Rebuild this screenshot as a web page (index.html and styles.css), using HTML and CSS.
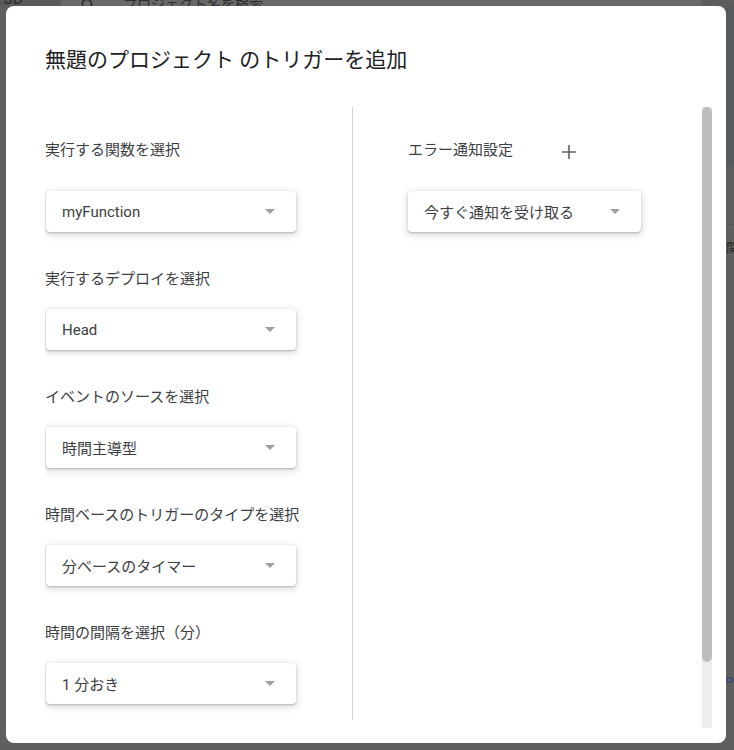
FILE: index.html
```html
<!DOCTYPE html>
<html lang="ja">
<head>
<meta charset="utf-8">
<title>トリガーを追加</title>
<link rel="stylesheet" href="styles.css">
</head>
<body>
<div class="page">
  <div class="topbar">
    <div class="brand">JD</div>
    <div class="search">
      <svg class="search-icon" width="20" height="20" viewBox="0 0 24 24"><path d="M15.5 14h-.79l-.28-.27A6.47 6.47 0 0 0 16 9.5 6.5 6.5 0 1 0 9.5 16c1.61 0 3.09-.59 4.230-1.57l.27.28v.79l5 4.99L20.49 19l-4.99-5zm-6 0C7.01 14 5 11.990 5 9.5S7.01 5 9.5 5 14 7.01 14 9.5 11.99 14 9.5 14z" fill="#2e2e2e"/></svg>
      <span class="search-text">プロジェクト名を検索</span>
    </div>
    <div class="topbar-end"></div>
  </div>
  <div class="main">
    <div class="filler"></div>
    <div class="side">
      <div class="side-head"></div>
      <div class="side-line"></div>
      <div class="side-text">関数</div>
      <div class="side-gap"></div>
      <div class="side-dot"></div>
    </div>
  </div>
</div>

<div class="dialog">
  <h1 class="title">無題のプロジェクト のトリガーを追加</h1>
  <div class="body">
    <div class="scroll-content">
      <div class="columns">
        <div class="col col-left">
          <div class="field field-first">
            <div class="label-row"><span class="label">実行する関数を選択</span></div>
            <div class="select"><span class="value">myFunction</span><i class="arrow"></i></div>
          </div>
          <div class="field">
            <div class="label">実行するデプロイを選択</div>
            <div class="select"><span class="value">Head</span><i class="arrow"></i></div>
          </div>
          <div class="field">
            <div class="label">イベントのソースを選択</div>
            <div class="select"><span class="value">時間主導型</span><i class="arrow"></i></div>
          </div>
          <div class="field">
            <div class="label">時間ベースのトリガーのタイプを選択</div>
            <div class="select"><span class="value">分ベースのタイマー</span><i class="arrow"></i></div>
          </div>
          <div class="field">
            <div class="label">時間の間隔を選択（分）</div>
            <div class="select"><span class="value">1 分おき</span><i class="arrow"></i></div>
          </div>
        </div>
        <div class="col col-right">
          <div class="field field-first">
            <div class="label-row">
              <span class="label">エラー通知設定</span>
              <button class="add" type="button" aria-label="追加">
                <svg width="14" height="14" viewBox="0 0 14 14"><path d="M7 0v14M0 7h14" stroke="#5f6368" stroke-width="1.6" fill="none"/></svg>
              </button>
            </div>
            <div class="select select-narrow"><span class="value">今すぐ通知を受け取る</span><i class="arrow"></i></div>
          </div>
        </div>
      </div>
    </div>
    <div class="scrollbar"><div class="thumb"></div></div>
  </div>
</div>
</body>
</html>
```

FILE: styles.css
```css
html, body {
  margin: 0;
  padding: 0;
}

body {
  width: 734px;
  height: 750px;
  overflow: hidden;
  background: #5f5f5f;
  font-family: Roboto, "Noto Sans CJK JP", sans-serif;
  position: relative;
}

/* background page (dimmed) */
.page {
  height: 750px;
  display: flex;
  flex-direction: column;
}

.topbar {
  height: 6px;
  display: flex;
  overflow: hidden;
  flex: none;
}

.brand {
  width: 61px;
  background: #5a5a5a;
  color: #2c2c2c;
  font-size: 16px;
  line-height: 14px;
  display: flex;
  align-items: flex-end;
  padding-left: 4px;
  box-sizing: border-box;
}

.search {
  width: 641px;
  background: #686868;
  display: flex;
  align-items: flex-end;
  padding-left: 18px;
  gap: 24px;
  box-sizing: border-box;
}

.search-icon {
  flex: none;
  margin-bottom: -10px;
}

.search-text {
  font-size: 14px;
  line-height: 16px;
  color: #2e2e2e;
  margin-bottom: -6px;
  white-space: nowrap;
}

.topbar-end {
  flex: 1;
  background: #5c5c5c;
}

.main {
  flex: 1;
  display: flex;
}

.filler {
  flex: 1;
}

.side {
  width: 8px;
  display: flex;
  flex-direction: column;
  overflow: hidden;
}

.side-head {
  height: 161px;
  background: #56595d;
}

.side-line {
  margin-top: 57px;
  height: 1px;
  background: #555;
}

.side-text {
  margin-top: 15px;
  font-size: 13px;
  line-height: 16px;
  color: #2a2a2a;
  white-space: nowrap;
}

.side-gap {
  height: 421px;
}

.side-dot {
  width: 6px;
  height: 6px;
  margin-left: 1px;
  border: 1.5px solid #1f3f7a;
  border-radius: 50%;
  box-sizing: border-box;
}

/* dialog */
.dialog {
  position: absolute;
  left: 6px;
  top: 6px;
  width: 720px;
  height: 737px;
  box-sizing: border-box;
  padding: 40px 14px 15px 39px;
  background: #fff;
  border-radius: 8px;
  display: flex;
  flex-direction: column;
}

.title {
  margin: 0 0 33px 0;
  font-size: 21px;
  line-height: 28px;
  font-weight: 400;
  color: #202124;
  flex: none;
}

.body {
  flex: 1;
  min-height: 0;
  display: flex;
}

.scroll-content {
  flex: 1;
  min-width: 0;
  overflow: hidden;
}

.scrollbar {
  width: 10px;
  flex: none;
  background: #eeeeee;
  display: flex;
  flex-direction: column;
}

.thumb {
  height: 555px;
  background: #bdbdbd;
  border-radius: 5px;
}

.columns {
  display: flex;
  padding-bottom: 82px;
}

.col {
  box-sizing: border-box;
  padding-top: 23px;
}

.col-left {
  width: 308px;
  flex: none;
  border-right: 1px solid #d3d3d3;
  padding-bottom: 16px;
}

.col-right {
  flex: 1;
  padding-left: 55px;
}

.field {
  display: flex;
  flex-direction: column;
  margin-top: 37px;
}

.field-first {
  margin-top: 0;
}

.label-row {
  height: 40px;
  display: flex;
  align-items: center;
}

.label {
  font-size: 15px;
  line-height: 20px;
  color: #3c4043;
  white-space: nowrap;
}

.field .label + .select {
  margin-top: 20px;
}

.label-row + .select {
  margin-top: 21px;
}

.select {
  width: 250px;
  height: 41px;
  margin-left: 1px;
  box-sizing: border-box;
  padding-left: 16px;
  border-radius: 4px;
  background: #fff;
  box-shadow: 0 1px 2px rgba(60, 64, 67, 0.3), 0 2px 6px 2px rgba(60, 64, 67, 0.15);
  display: flex;
  align-items: center;
}

.select-narrow {
  width: 233px;
  margin-left: 0;
}

.value {
  font-size: 15px;
  color: #3c4043;
  white-space: nowrap;
}

.arrow {
  margin-left: auto;
  margin-right: 21px;
  width: 0;
  height: 0;
  border-left: 5px solid transparent;
  border-right: 5px solid transparent;
  border-top: 5px solid #9e9e9e;
}

.add {
  width: 40px;
  height: 40px;
  margin-left: 36px;
  padding: 0;
  border: none;
  background: transparent;
  display: flex;
  align-items: center;
  justify-content: center;
  margin-top: 3px;
}
```
